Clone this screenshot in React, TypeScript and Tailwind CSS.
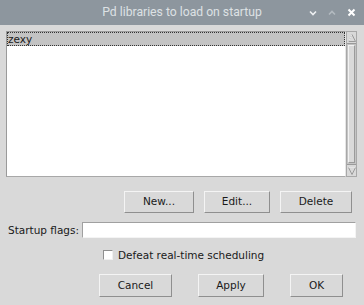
import React from 'react'

const font = { fontFamily: '"DejaVu Sans", sans-serif' }

const TkButton = ({ label, w, h = 'h-[22px]' }: { label: string; w: string; h?: string }) => (
  <button
    className={`${w} ${h} flex items-center justify-center bg-[#d9d9d9] text-[10.5px] text-[#1a1a1a] border border-t-[#f4f4f4] border-l-[#f4f4f4] border-b-[#8f8f8f] border-r-[#8f8f8f]`}
  >
    {label}
  </button>
)

const App = () => {
  return (
    <div className="w-[364px] h-[305px] flex flex-col bg-[#d9d9d9] overflow-hidden" style={font}>
      {/* Title bar */}
      <div className="relative h-[25px] bg-[#8d969e] flex items-center justify-center shrink-0">
        <span
          className="text-[12.2px] text-[#dde1e4] whitespace-nowrap"
          style={{ fontFamily: 'Roboto, "Noto Sans", sans-serif' }}
        >
          Pd libraries to load on startup
        </span>
        <div className="absolute right-[8px] top-0 h-[25px] flex items-center gap-[11px]">
          <svg width="8" height="6" viewBox="0 0 8 6">
            <path d="M1 1.5 L4 4.5 L7 1.5" stroke="#eef0f2" strokeWidth="1.6" fill="none" />
          </svg>
          <svg width="8" height="6" viewBox="0 0 8 6">
            <path d="M1 4.5 L4 1.5 L7 4.5" stroke="#b3bac0" strokeWidth="1.6" fill="none" />
          </svg>
          <svg width="9" height="9" viewBox="0 0 9 9">
            <path d="M1.5 1.5 L7.5 7.5 M7.5 1.5 L1.5 7.5" stroke="#ffffff" strokeWidth="2" fill="none" />
          </svg>
        </div>
      </div>

      {/* Body */}
      <div className="flex flex-col pt-[6px]">
        {/* Listbox + scrollbar */}
        <div className="flex ml-[6px] mr-[7px] h-[146px]">
          <div className="flex-1 bg-white border border-t-[#9a9a9a] border-l-[#9a9a9a] border-b-[#a8a8a8] border-r-[#e6e6e6]">
            <div className="h-[14px] bg-[#c3c3c3] border border-dotted border-[#333] flex items-center text-[10.5px] text-[#1a1a1a] leading-none">
              zexy
            </div>
          </div>
          <div className="w-[11px] flex flex-col bg-[#c4c4c4] border border-[#a8a8a8]">
            <div className="h-[12px] bg-[#d9d9d9] flex items-center justify-center border-b border-[#9a9a9a]">
              <svg width="8" height="8" viewBox="0 0 8 8">
                <path d="M4 0.5 L7.5 7.5 L0.5 7.5 Z" fill="#d9d9d9" stroke="#8a8a8a" strokeWidth="0.8" />
                <path d="M4 0.5 L0.5 7.5" stroke="#f8f8f8" strokeWidth="0.8" />
              </svg>
            </div>
            <div className="flex-1 bg-[#d9d9d9] m-[1px] border border-t-[#f2f2f2] border-l-[#f2f2f2] border-b-[#9a9a9a] border-r-[#9a9a9a]" />
            <div className="h-[12px] bg-[#d9d9d9] flex items-center justify-center border-t border-[#9a9a9a]">
              <svg width="8" height="8" viewBox="0 0 8 8">
                <path d="M0.5 0.5 L7.5 0.5 L4 7.5 Z" fill="#d9d9d9" stroke="#8a8a8a" strokeWidth="0.8" />
                <path d="M0.5 0.5 L7.5 0.5" stroke="#f8f8f8" strokeWidth="0.8" />
              </svg>
            </div>
          </div>
        </div>

        {/* New / Edit / Delete */}
        <div className="flex justify-end gap-[10px] mt-[14px] mr-[12px]">
          <TkButton label="New..." w="w-[70px]" />
          <TkButton label="Edit..." w="w-[66px]" />
          <TkButton label="Delete" w="w-[72px]" />
        </div>

        {/* Startup flags */}
        <div className="flex items-center h-[16px] mt-[9px] ml-[8px] mr-[8px]">
          <span className="text-[10.5px] text-[#1a1a1a] w-[74px] whitespace-nowrap leading-none">Startup flags:</span>
          <div className="flex-1 h-[16px] bg-white border border-t-[#a0a0a0] border-l-[#a0a0a0] border-b-[#f4f4f4] border-r-[#f4f4f4]" />
        </div>

        {/* Checkbox */}
        <div className="flex items-center h-[14px] mt-[10px] ml-[103px]">
          <div className="w-[10px] h-[10px] bg-white border border-t-[#8f8f8f] border-l-[#8f8f8f] border-b-[#f0f0f0] border-r-[#f0f0f0]" />
          <span className="ml-[5px] text-[10.5px] text-[#1a1a1a] leading-none">Defeat real-time scheduling</span>
        </div>

        {/* Cancel / Apply / OK */}
        <div className="flex justify-end gap-[26px] mt-[12px] mr-[21px]">
          <TkButton label="Cancel" w="w-[73px]" h="h-[23px]" />
          <TkButton label="Apply" w="w-[66px]" h="h-[23px]" />
          <TkButton label="OK" w="w-[53px]" h="h-[23px]" />
        </div>
      </div>
    </div>
  )
}

export default App
